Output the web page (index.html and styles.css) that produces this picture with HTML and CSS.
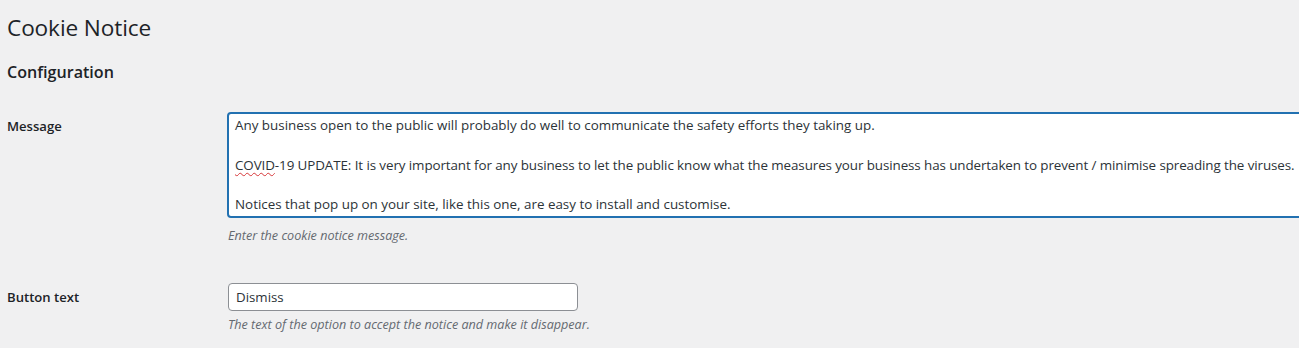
FILE: index.html
```html
<!DOCTYPE html>
<html>
<head>
<meta charset="utf-8">
<link rel="stylesheet" href="styles.css">
</head>
<body>
<div class="wrap">
  <h1 class="title">Cookie Notice</h1>
  <h2 class="section">Configuration</h2>
  <div class="form">
    <div class="row row-message">
      <div class="label">Message</div>
      <div class="field">
        <div class="textarea"><p>Any business open to the public will probably do well to communicate the safety efforts they taking up.</p><p class="tight"><span class="spell">COVID</span>-19 UPDATE: It is very important for any business to let the public know what the measures your business has undertaken to prevent / minimise spreading the viruses.</p><p>Notices that pop up on your site, like this one, are easy to install and customise.</p></div>
        <div class="desc">Enter the cookie notice message.</div>
      </div>
    </div>
    <div class="row row-button">
      <div class="label">Button text</div>
      <div class="field">
        <div class="input">Dismiss</div>
        <div class="desc">The text of the option to accept the notice and make it disappear.</div>
      </div>
    </div>
  </div>
</div>
</body>
</html>
```
FILE: styles.css
```css
html, body {
  margin: 0;
  padding: 0;
  background: #f0f0f1;
  overflow: hidden;
}
body {
  font-family: "Open Sans", "Noto Sans", sans-serif;
  color: #1d2327;
  font-size: 13px;
}
.wrap {
  padding-left: 7px;
  width: 1400px;
}
.title {
  margin: 0;
  padding-top: 13px;
  font-size: 22.6px;
  font-weight: 400;
  line-height: 30px;
  letter-spacing: -0.1px;
}
.section {
  margin: 18px 0 0;
  font-size: 16.1px;
  font-weight: 600;
  line-height: 22px;
}
.form {
  display: flex;
  flex-direction: column;
}
.row {
  display: flex;
}
.label {
  width: 220px;
  flex: none;
  font-size: 13.1px;
  font-weight: 600;
  line-height: 20px;
}
.row-message {
  margin-top: 29px;
}
.row-message .label {
  padding-top: 4px;
}
.textarea {
  width: 1200px;
  height: 100px;
  box-sizing: content-box;
  border: 2px solid #2271b1;
  border-radius: 4px;
  background: #fff;
  padding: 2px 6px 0;
  font-size: 13.4px;
  line-height: 19.8px;
  color: #2c3338;
  white-space: nowrap;
}
.textarea p {
  margin: 0 0 19.8px;
}
.textarea p:last-child {
  margin: 0;
}
.textarea p.tight {
  letter-spacing: -0.09px;
}
.spell {
  text-decoration: underline wavy #d63638;
  text-decoration-thickness: 1px;
  text-underline-offset: 2px;
}
.desc {
  font-style: italic;
  color: #646970;
  font-size: 12.6px;
  line-height: 18px;
  margin-top: 9px;
  padding-left: 1px;
}
.row-button {
  margin-top: 38px;
}
.row-button .label {
  padding-top: 4px;
}
.input {
  width: 334px;
  height: 26px;
  border: 1px solid #8c8f94;
  border-radius: 4px;
  background: #fff;
  padding: 0 7px;
  line-height: 26px;
  font-size: 13.3px;
  color: #2c3338;
  margin-left: 1px;
}
.row-button .desc {
  margin-top: 5px;
}
```
